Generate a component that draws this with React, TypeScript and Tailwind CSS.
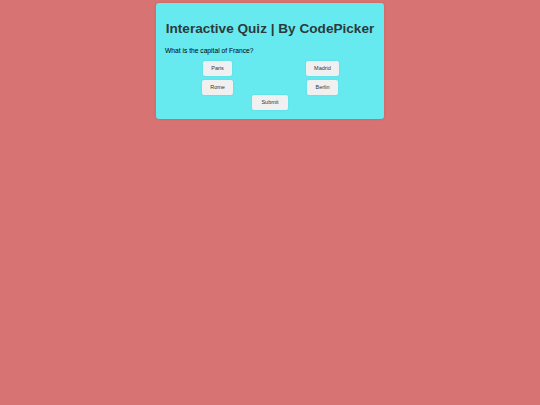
export default function App() {
    const options = ["Paris", "Madrid", "Rome", "Berlin"];

    return (
        <div className="w-full min-h-[405px] bg-[#d87373] font-['Liberation_Sans',Arial,sans-serif]">
            {/* Quiz Card */}
            <div className="mx-auto pt-[3px] w-[228px]">
                <div className="bg-[#67e9f0] rounded-[3px] px-[9px] pt-[17px] pb-[9px] shadow-[0_0_3px_rgba(0,0,0,0.15)]">
                    <h1 className="text-center text-[13.6px] font-bold text-[#2d3a3c] leading-[18px] whitespace-nowrap">
                        Interactive Quiz | By CodePicker
                    </h1>
                    <p className="mt-[8px] text-[6.7px] leading-[9px] text-black">
                        What is the capital of France?
                    </p>

                    {/* Options */}
                    <div className="mt-[6px] grid grid-cols-2 gap-y-[4px]">
                        {options.map((option) => (
                            <div key={option} className="flex justify-center">
                                <button className="h-[15px] px-[8px] rounded-[2px] bg-[#f0f0f0] text-[5.5px] text-[#333] shadow-[0_0_2px_rgba(0,0,0,0.1)]">
                                    {option}
                                </button>
                            </div>
                        ))}
                    </div>

                    <div className="flex justify-center">
                        <button className="h-[15px] px-[9px] rounded-[2px] bg-[#f0f0f0] text-[5.5px] text-[#333] shadow-[0_0_2px_rgba(0,0,0,0.1)]">
                            Submit
                        </button>
                    </div>
                </div>
            </div>
        </div>
    );
}
